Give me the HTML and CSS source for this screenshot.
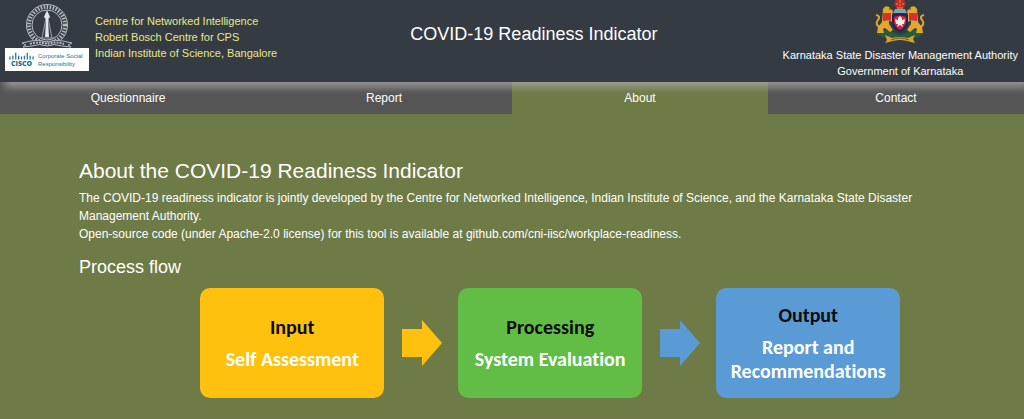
FILE: index.html
```html
<!DOCTYPE html>
<html lang="en">
<head>
  <meta charset="utf-8">
  <title>COVID-19 Readiness Indicator</title>
  <link rel="stylesheet" href="styles.css">
</head>
<body>
  <header class="header">
    <div class="header-left">
      <div class="logos">
        <svg class="iisc-logo" viewBox="0 0 54 44" role="img" aria-label="Indian Institute of Science">
          <g fill="none" stroke="#b3b9bd">
            <circle cx="27" cy="21" r="18" stroke-width="4" stroke-dasharray="1.5 1.5"/>
            <circle cx="27" cy="21" r="20.5" stroke-width="1"/>
            <circle cx="27" cy="21" r="15" stroke-width="1"/>
            <path d="M22 34 L26 14 M32 34 L28 14 M20 34 H34" stroke-width="0.8"/>
            <path d="M2 39 L11 37 Q18 35 27 38 Q36 35 43 37 L52 39 L48 41 L51 43 L42 42 Q34 39 27 42 Q20 39 12 42 L3 43 L6 41 Z" fill="#343b43" stroke-width="1"/>
            <path d="M10 40 Q19 37 27 40 Q35 37 44 40" stroke-width="2" stroke-dasharray="2 1"/>
          </g>
          <path d="M27 6 L30 13 L28 15 L29 33 H25 L26 15 L24 13 Z" fill="#e4e7e8"/>
        </svg>
        <div class="cisco">
          <div class="cisco-brand">
            <svg class="cisco-bars" viewBox="0 0 26 8" aria-hidden="true">
              <path d="M1 5v2M4 4v3M7 1v6M10 4v3M13 5v2M16 4v3M19 1v6M22 4v3M25 5v2" stroke="#1d7294" stroke-width="1.3" stroke-linecap="round"/>
            </svg>
            <b>CISCO</b>
          </div>
          <div class="cisco-text">Corporate Social<br>Responsibility</div>
        </div>
      </div>
      <div class="centre">Centre for Networked Intelligence<br>Robert Bosch Centre for CPS<br>Indian Institute of Science, Bangalore</div>
    </div>
    <h1 class="title">COVID-19 Readiness Indicator</h1>
    <div class="header-right">
      <svg class="emblem" viewBox="0 0 50 44" role="img" aria-label="Government of Karnataka">
        <path d="M2 33 Q8 28 15 31 L25 35 L35 31 Q42 28 48 33 Q44 39 36 38 L25 38 L14 38 Q6 39 2 33 Z" fill="#245c3c"/>
        <g id="lion">
          <path d="M8 9 Q10 5 14 7 L18 11 L17 15 L20 19 L17 22 L14 20 L14 24 L18 30 L15 32 L10 28 L8 29 L9 33 L2 33 L3 27 L7 22 Z" fill="#e1a82c"/>
          <path d="M4 27 Q0 24 3 20 Q6 16 1 15" fill="none" stroke="#e1a82c" stroke-width="2"/>
          <path d="M8 13 L16 13 L16 20 L8 21 Z" fill="#d63030"/>
          <path d="M14 9h2" stroke="#583d1c"/>
        </g>
        <use href="#lion" transform="matrix(-1 0 0 1 50 0)"/>
        <path d="M17 15 Q25 11 33 15 L33 24 Q31 30 25 32 Q19 30 17 24 Z" fill="#252459"/>
        <path d="M19 17 Q25 14 31 17 L31 23 Q29 28 25 30 Q21 28 19 23 Z" fill="#cf2638"/>
        <path d="M20 19 L23 20 L23 18 L25 16 L27 18 L27 20 L30 19 L29 24 L27 24 L28 27 L25 25 L22 27 L23 24 L21 24 Z" fill="#f2eaea"/>
        <path d="M20 9h10l2 4H18z" fill="#79a5b4"/>
        <path d="M21 0 L19 4 L22 9 H28 L31 4 L29 0 Z" fill="#bd2b28"/>
        <path d="M22 8h6M25 0v3" stroke="#d49a34"/>
        <path d="M21 4h2M24 5h2M27 4h2" stroke="#d49a34"/>
        <path d="M10 35 L17 38 Q25 36 33 38 L40 35 L38 39 L40 43 L32 41 Q25 39 18 41 L10 43 L12 40 Z" fill="#d6a235"/>
        <path d="M16 40 Q25 36 34 40" stroke="#705923" fill="none"/>
      </svg>
      <div>Karnataka State Disaster Management Authority<br>Government of Karnataka</div>
    </div>
  </header>

  <nav class="navbar">
    <a href="#questionnaire">Questionnaire</a>
    <a href="#report">Report</a>
    <a href="#about" class="active">About</a>
    <a href="#contact">Contact</a>
  </nav>

  <main class="content" id="about">
    <h2>About the COVID-19 Readiness Indicator</h2>
    <p>The COVID-19 readiness indicator is jointly developed by the Centre for Networked Intelligence, Indian Institute of Science, and the Karnataka State Disaster Management Authority.</p>
    <p>Open-source code (under Apache-2.0 license) for this tool is available at <a href="https://github.com/cni-iisc/workplace-readiness">github.com/cni-iisc/workplace-readiness</a>.</p>
    <h3>Process flow</h3>
    <div class="flow">
      <div class="box input">
        <strong>Input</strong>
        <span>Self Assessment</span>
      </div>
      <svg class="arrow" viewBox="0 0 40 46" aria-hidden="true"><path d="M0 9H20V0L40 23L20 46V37H0Z" fill="#ffc10e"/></svg>
      <div class="box processing">
        <strong>Processing</strong>
        <span>System Evaluation</span>
      </div>
      <svg class="arrow" viewBox="0 0 40 46" aria-hidden="true"><path d="M0 9H20V0L40 23L20 46V37H0Z" fill="#5b9bd5"/></svg>
      <div class="box output">
        <strong>Output</strong>
        <span>Report and Recommendations</span>
      </div>
    </div>
  </main>
</body>
</html>
```
FILE: styles.css
```css
* {
  box-sizing: border-box;
}

body {
  margin: 0;
  font-family: Arial, "Liberation Sans", sans-serif;
  background-color: #6f7b47;
  color: #fff;
}

/* Header */
.header {
  position: relative;
  display: grid;
  grid-template-columns: auto 1fr auto;
  height: 82px;
  background-color: #343b43;
  box-shadow: 5px 5px 8px rgba(170, 170, 170, 0.8);
  font-size: 11px;
  line-height: 16px;
}

.header-left {
  display: flex;
  gap: 6px;
  padding: 4px 8px 0 5px;
}

.logos {
  width: 84px;
}

.iisc-logo {
  display: block;
  width: 54px;
  height: 44px;
  margin: 0 auto;
}

.cisco {
  display: flex;
  align-items: center;
  gap: 4px;
  height: 23px;
  padding: 0 4px;
  background-color: #fff;
  color: #1d7294;
  font-size: 6px;
  line-height: 8px;
}

.cisco-brand b {
  display: block;
  font-family: "Open Sans", sans-serif;
  font-size: 7px;
  font-weight: 800;
  text-align: center;
}

.cisco-bars {
  display: block;
  width: 25px;
  height: 8px;
}

.cisco-text {
  white-space: nowrap;
}

.centre {
  padding-top: 9px;
  color: #e8e88c;
  white-space: nowrap;
}

.title {
  margin: 0;
  padding-top: 22px;
  font-size: 18px;
  font-weight: normal;
  line-height: 24px;
  text-align: center;
}

.header-right {
  padding-right: 6px;
  text-align: center;
  white-space: nowrap;
}

.emblem {
  display: block;
  width: 50px;
  height: 44px;
  margin: 0 auto 3px;
}

/* Navigation */
.navbar {
  display: grid;
  grid-template-columns: repeat(4, 1fr);
  background-color: #555;
}

.navbar a {
  color: #fff;
  font-size: 12px;
  line-height: 32px;
  text-align: center;
  text-decoration: none;
}

.navbar a.active {
  background-color: #6f7b47;
}

/* Content */
.content {
  padding: 44px 79px 20px;
}

.content h2,
.content h3 {
  margin: 0;
  font-weight: normal;
}

.content h2 {
  margin-bottom: 5px;
  font-size: 21px;
  line-height: 26px;
}

.content h3 {
  margin: 13px 0 10px;
  font-size: 18px;
  line-height: 22px;
}

.content p {
  margin: 0;
  font-size: 12px;
  line-height: 18px;
}

.content p a {
  color: #fff;
  text-decoration: none;
}

/* Process flow */
.flow {
  display: flex;
  align-items: center;
  padding-left: 14%;
}

.box {
  display: flex;
  flex-direction: column;
  justify-content: center;
  gap: 8px;
  width: 184px;
  height: 110px;
  border-radius: 10px;
  font-family: Carlito, Lato, sans-serif;
  font-size: 20px;
  font-weight: bold;
  font-variant-ligatures: none;
  line-height: 24px;
  text-align: center;
}

.box strong {
  color: #0b0b0b;
}

.input {
  background-color: #ffc10e;
}

.processing {
  background-color: #62bd46;
}

.output {
  background-color: #5b9bd5;
}

.arrow {
  flex: none;
  width: 40px;
  height: 46px;
  margin: 0 16px 0 18px;
}
```
